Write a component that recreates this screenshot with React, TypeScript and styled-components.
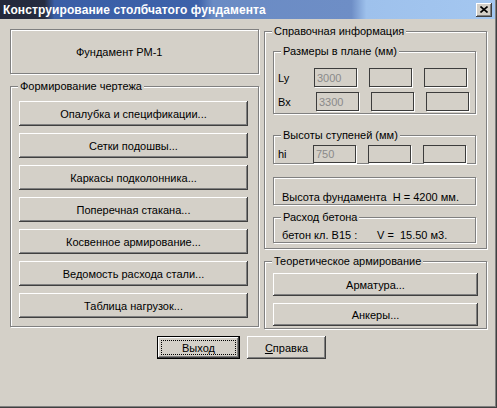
import React from "react";
import styled, { createGlobalStyle } from "styled-components";

const GlobalStyle = createGlobalStyle`
  html, body {
    margin: 0;
    padding: 0;
    background: #d4d0c8;
  }
  * {
    box-sizing: border-box;
  }
`;

const FACE = "#d4d0c8";
const FONT = `"Liberation Sans", Arial, sans-serif`;

const Window = styled.div`
  width: 497px;
  height: 408px;
  background: ${FACE};
  font-family: ${FONT};
  font-size: 11px;
  color: #000;
  box-shadow: inset -1px -1px 0 #404040, inset -2px -2px 0 #808080;
  display: flex;
  flex-direction: column;
  overflow: hidden;
`;

const TitleBar = styled.div`
  height: 19px;
  margin-right: 2px;
  display: flex;
  align-items: center;
  justify-content: space-between;
  padding: 0 3px 0 3px;
  background: linear-gradient(
    to right,
    #23283a 0%,
    #262c40 9%,
    #3a5ea6 11%,
    #3d62aa 40%,
    #6a8bc4 43%,
    #6e8ec6 71%,
    #9ec1ec 74%,
    #a4c7f0 100%
  );
`;

const Title = styled.span`
  color: #fff;
  font-weight: bold;
  font-size: 12px;
  letter-spacing: 0.1px;
  white-space: nowrap;
`;

const CloseButton = styled.button`
  width: 16px;
  height: 14px;
  padding: 0;
  border: none;
  background: ${FACE};
  display: flex;
  align-items: center;
  justify-content: center;
  box-shadow: inset -1px -1px 0 #404040, inset 1px 1px 0 #fff,
    inset -2px -2px 0 #808080;
`;

const Body = styled.div`
  display: flex;
  gap: 5px;
  padding: 10px 0 0 10px;
  align-items: flex-start;
`;

const Column = styled.div<{ $width: number; $top?: number }>`
  width: ${({ $width }) => $width}px;
  padding-top: ${({ $top }) => $top ?? 0}px;
  display: flex;
  flex-direction: column;
`;

const Etched = styled.div<{ $height: number; $mt?: number }>`
  height: ${({ $height }) => $height}px;
  margin-top: ${({ $mt }) => $mt ?? 0}px;
  border: 1px solid #808080;
  box-shadow: inset 1px 1px 0 #fff, 1px 1px 0 #fff;
`;

const NameFrame = styled(Etched)`
  display: flex;
  align-items: center;
  padding-left: 65px;
  padding-top: 1px;
`;

const HeightFrame = styled(Etched)`
  display: flex;
  align-items: flex-end;
  padding-left: 8px;
  line-height: 13px;
  white-space: pre;
`;

const Group = styled.div<{ $mt?: number; $pad: string; $gap?: number }>`
  position: relative;
  margin-top: ${({ $mt }) => $mt ?? 0}px;
  padding: ${({ $pad }) => $pad};
  border: 1px solid #808080;
  box-shadow: inset 1px 1px 0 #fff, 1px 1px 0 #fff;
  display: flex;
  flex-direction: column;
  gap: ${({ $gap }) => $gap ?? 0}px;
`;

const Caption = styled.span`
  position: absolute;
  top: -7px;
  left: 7px;
  padding: 0 2px;
  line-height: 13px;
  background: ${FACE};
  white-space: nowrap;
`;

const Button = styled.button<{ $w: number; $h: number }>`
  width: ${({ $w }) => $w}px;
  height: ${({ $h }) => $h}px;
  flex: none;
  padding: 0;
  margin: 0;
  border: none;
  background: ${FACE};
  font-family: ${FONT};
  font-size: 11px;
  color: #000;
  box-shadow: inset -1px -1px 0 #404040, inset 1px 1px 0 #fff,
    inset -2px -2px 0 #808080;
`;

const DefaultButton = styled(Button)`
  position: relative;
  border: 1px solid #000;
  &::after {
    content: "";
    position: absolute;
    inset: 3px;
    border: 1px dotted #000;
  }
`;

const InputRow = styled.div<{ $shift: number }>`
  display: flex;
  align-items: center;
  height: 19px;
  padding-left: 4px;
`;

const RowLabel = styled.span`
  width: 36px;
  flex: none;
`;

const Fields = styled.div<{ $shift: number }>`
  display: flex;
  gap: 12px;
  margin-left: ${({ $shift }) => $shift}px;
`;

const Field = styled.input<{ $h: number }>`
  width: 43px;
  height: ${({ $h }) => $h}px;
  margin: 0;
  padding: 0 0 0 2px;
  border: 1px solid #3c3c3c;
  box-shadow: 1px 1px 0 #fff;
  background: ${FACE};
  font-family: ${FONT};
  font-size: 11px;
  color: #8a8a8a;
  outline: none;
`;

const ConcreteText = styled.div`
  display: flex;
  padding-left: 8px;
  line-height: 13px;
  white-space: pre;
`;

const Grade = styled.span`
  width: 95px;
`;

const Footer = styled.div`
  display: flex;
  gap: 7px;
  padding: 7px 0 0 157px;
`;

const Mnemonic = styled.span`
  text-decoration: underline;
`;

type RowProps = { label: string; values: string[]; shift: number; h: number };

const Row = ({ label, values, shift, h }: RowProps) => (
  <InputRow $shift={shift} style={{ height: h }}>
    <RowLabel>{label}</RowLabel>
    <Fields $shift={shift}>
      {values.map((v, i) => (
        <Field key={i} $h={h} value={v} readOnly />
      ))}
    </Fields>
  </InputRow>
);

const drawingButtons = [
  "Опалубка и спецификации...",
  "Сетки подошвы...",
  "Каркасы подколонника...",
  "Поперечная стакана...",
  "Косвенное армирование...",
  "Ведомость расхода стали...",
  "Таблица нагрузок...",
];

const App = () => {
  return (
    <>
      <GlobalStyle />
      <Window>
        <TitleBar>
          <Title>Конструирование столбчатого фундамента</Title>
          <CloseButton aria-label="close">
            <svg width="8" height="7" viewBox="0 0 8 7">
              <path
                d="M0.5 0.5 L7.5 6.5 M7.5 0.5 L0.5 6.5"
                stroke="#000"
                strokeWidth="1.6"
                fill="none"
              />
            </svg>
          </CloseButton>
        </TitleBar>
        <Body>
          <Column $width={249}>
            <NameFrame $height={45}>Фундамент РМ-1</NameFrame>
            <Group $mt={12} $pad="14px 10px 8px 8px" $gap={7}>
              <Caption>Формирование чертежа</Caption>
              {drawingButtons.map((t) => (
                <Button key={t} $w={229} $h={25}>
                  {t}
                </Button>
              ))}
            </Group>
          </Column>
          <Column $width={223} $top={2}>
            <Group $pad="19px 0 5px 8px">
              <Caption>Справочная информация</Caption>
              <Group $pad="16px 0 2px 0" $gap={5} style={{ width: 203 }}>
                <Caption>Размеры в плане (мм)</Caption>
                <Row label="Ly" values={["3000", "", ""]} shift={0} h={19} />
                <Row label="Bx" values={["3300", "", ""]} shift={2} h={19} />
              </Group>
              <Group $mt={21} $pad="9px 0 0 0" style={{ width: 203 }}>
                <Caption>Высоты ступеней (мм)</Caption>
                <Row label="hi" values={["750", "", ""]} shift={-1} h={18} />
              </Group>
              <HeightFrame $height={28} $mt={13} style={{ width: 203 }}>
                {"Высота фундамента  H = 4200 мм."}
              </HeightFrame>
              <Group $mt={12} $pad="11px 0 0 0" style={{ width: 203, height: 26 }}>
                <Caption>Расход бетона</Caption>
                <ConcreteText>
                  <Grade>бетон кл. В15 :</Grade>
                  <span>{"V =  15.50 м3."}</span>
                </ConcreteText>
              </Group>
            </Group>
            <Group $mt={12} $pad="11px 0 2px 8px" $gap={7}>
              <Caption>Теоретическое армирование</Caption>
              <Button $w={205} $h={23}>
                Арматура...
              </Button>
              <Button $w={205} $h={23}>
                Анкеры...
              </Button>
            </Group>
          </Column>
        </Body>
        <Footer>
          <DefaultButton $w={83} $h={23}>
            Выход
          </DefaultButton>
          <Button $w={79} $h={23}>
            <Mnemonic>С</Mnemonic>правка
          </Button>
        </Footer>
      </Window>
    </>
  );
};

export default App;
